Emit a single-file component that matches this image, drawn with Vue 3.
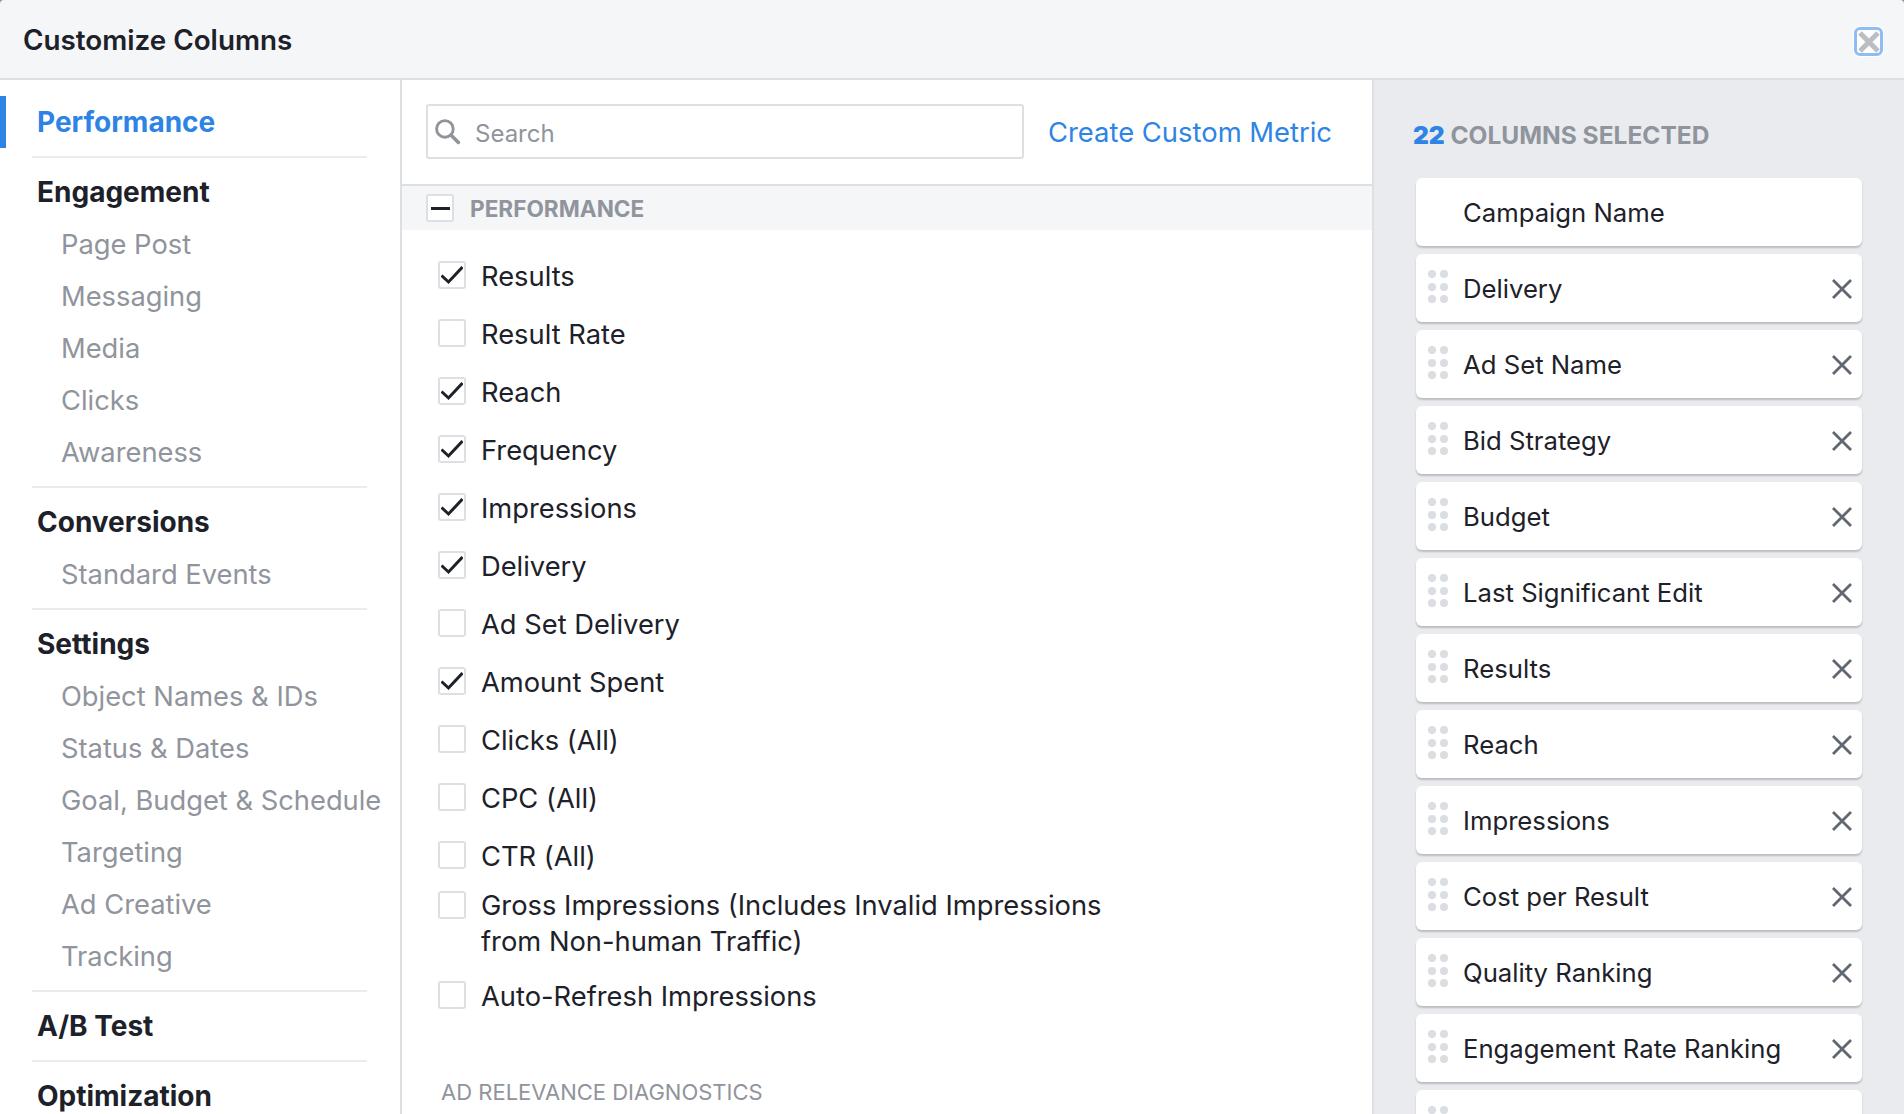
<template>
  <div class="modal">
    <header class="modal-head">
      <h1>Customize Columns</h1>
      <button class="close-btn" aria-label="Close">
        <svg width="22" height="22" viewBox="0 0 22 22" fill="none" stroke="#bcbec2" stroke-width="5">
          <path d="M2 2L20 20M20 2L2 20"/>
        </svg>
      </button>
    </header>

    <div class="modal-body">
      <nav class="side">
        <div class="side-row active">Performance</div>
        <template v-for="group in navGroups" :key="group.title">
          <hr class="side-rule" />
          <div class="side-row">{{ group.title }}</div>
          <div v-for="sub in group.items" :key="sub" class="side-sub">{{ sub }}</div>
        </template>
      </nav>

      <main class="middle">
        <div class="search-bar">
          <div class="search-box">
            <svg width="27" height="27" viewBox="0 0 26 26" fill="none" stroke="#90949c" stroke-width="2.8">
              <circle cx="10.5" cy="10.5" r="8"/>
              <path d="M16.5 16.5L23.5 23.5" stroke-linecap="round" stroke-width="3.4"/>
            </svg>
            <span>Search</span>
          </div>
          <a class="metric-link">Create Custom Metric</a>
        </div>

        <div class="section-head">
          <span class="check-box minus"><i></i></span>
          <span>PERFORMANCE</span>
        </div>

        <ul class="metric-list">
          <li v-for="m in metrics" :key="m.name" :class="{ tall: m.tall }">
            <span class="check-box">
              <svg v-if="m.on" width="22" height="22" viewBox="0 0 22 22" fill="none" stroke="#1d2129" stroke-width="3">
                <path d="M0.5 11.5L7.5 18L21.5 3"/>
              </svg>
            </span>
            <span class="metric-name">{{ m.name }}</span>
          </li>
        </ul>

        <div class="next-section">AD RELEVANCE DIAGNOSTICS</div>
      </main>

      <aside class="picked">
        <div class="picked-count"><b>22</b> COLUMNS SELECTED</div>
        <div class="card fixed">Campaign Name</div>
        <div v-for="c in columns" :key="c" class="card">
          <span class="dots"><i v-for="n in 6" :key="n"></i></span>
          <span class="card-name">{{ c }}</span>
          <svg class="remove" width="22" height="22" viewBox="0 0 22 22" fill="none" stroke="#606770" stroke-width="2.8">
            <path d="M2 2L20 20M20 2L2 20"/>
          </svg>
        </div>
        <div class="card">
          <span class="dots"><i v-for="n in 6" :key="n"></i></span>
        </div>
      </aside>
    </div>
  </div>
</template>

<script setup>
const navGroups = [
  { title: 'Engagement', items: ['Page Post', 'Messaging', 'Media', 'Clicks', 'Awareness'] },
  { title: 'Conversions', items: ['Standard Events'] },
  {
    title: 'Settings',
    items: ['Object Names & IDs', 'Status & Dates', 'Goal, Budget & Schedule', 'Targeting', 'Ad Creative', 'Tracking']
  },
  { title: 'A/B Test', items: [] },
  { title: 'Optimization', items: [] }
]

const metrics = [
  { name: 'Results', on: true },
  { name: 'Result Rate', on: false },
  { name: 'Reach', on: true },
  { name: 'Frequency', on: true },
  { name: 'Impressions', on: true },
  { name: 'Delivery', on: true },
  { name: 'Ad Set Delivery', on: false },
  { name: 'Amount Spent', on: true },
  { name: 'Clicks (All)', on: false },
  { name: 'CPC (All)', on: false },
  { name: 'CTR (All)', on: false },
  { name: 'Gross Impressions (Includes Invalid Impressions from Non-human Traffic)', on: false, tall: true },
  { name: 'Auto-Refresh Impressions', on: false }
]

const columns = [
  'Delivery',
  'Ad Set Name',
  'Bid Strategy',
  'Budget',
  'Last Significant Edit',
  'Results',
  'Reach',
  'Impressions',
  'Cost per Result',
  'Quality Ranking',
  'Engagement Rate Ranking'
]
</script>

<style>
html, body {
  margin: 0;
  overflow: hidden;
  background: #8a8d91;
}
</style>

<style scoped>
.modal {
  height: 1114px;
  overflow: hidden;
  display: flex;
  flex-direction: column;
  font-family: Inter, "Liberation Sans", sans-serif;
  color: #1d2129;
  font-size: 27.3px;
}

.modal-head {
  height: 78px;
  flex: none;
  box-sizing: content-box;
  display: flex;
  align-items: center;
  justify-content: space-between;
  padding: 0 21px 0 23px;
  background: #f5f6f7;
  border-bottom: 2px solid #dddfe2;
  border-radius: 4px 4px 0 0;
}

.modal-head h1 {
  margin: 2px 0 0;
  font-size: 27.8px;
  font-weight: 600;
}

.close-btn {
  width: 29px;
  height: 29px;
  padding: 0;
  margin-top: 5px;
  display: flex;
  align-items: center;
  justify-content: center;
  background: #fff;
  border: 3px solid #8ebdf5;
  border-radius: 6px;
  box-shadow: 0 0 0 1px #fff;
}

.modal-body {
  flex: 1;
  min-height: 0;
  display: flex;
  background: #fff;
}

.side {
  width: 400px;
  flex: none;
  padding: 16px 0 0;
  border-right: 2px solid #dddfe2;
  box-sizing: content-box;
}

.side-row {
  height: 52px;
  line-height: 53px;
  padding-left: 37px;
  font-size: 28px;
  font-weight: 700;
}

.side-row.active {
  color: #2d84e4;
  border-left: 6px solid #2d84e4;
  padding-left: 31px;
}

.side-sub {
  height: 52px;
  line-height: 53px;
  padding-left: 61px;
  color: #90949c;
  white-space: nowrap;
}

.side-rule {
  margin: 8px 33px 8px 32px;
  height: 2px;
  border: 0;
  background: #e9ebee;
}

.middle {
  width: 970px;
  flex: none;
  border-right: 2px solid #dddfe2;
}

.search-bar {
  height: 104px;
  box-sizing: border-box;
  padding: 24px 0 0 24px;
  display: flex;
  align-items: flex-start;
  gap: 24px;
}

.search-box {
  width: 598px;
  height: 55px;
  box-sizing: border-box;
  display: flex;
  align-items: center;
  gap: 14px;
  padding-left: 6px;
  border: 2px solid #dddfe2;
  border-radius: 3px;
  color: #90949c;
  font-size: 24px;
}

.search-box span {
  margin-top: 3px;
}

.metric-link {
  line-height: 57px;
  color: #2d84e4;
  font-size: 27.4px;
  white-space: nowrap;
}

.section-head {
  height: 44px;
  display: flex;
  align-items: center;
  gap: 16px;
  padding-left: 24px;
  background: #f5f6f7;
  border-top: 2px solid #dddfe2;
  color: #90949c;
  font-size: 22.6px;
  font-weight: 700;
}

.check-box {
  width: 28px;
  height: 28px;
  flex: none;
  box-sizing: border-box;
  display: flex;
  align-items: center;
  justify-content: center;
  background: #fff;
  border: 2px solid #dddfe2;
  border-radius: 3px;
}

.minus i {
  width: 19px;
  height: 3px;
  background: #1d2129;
}

.metric-list {
  list-style: none;
  margin: 0;
  padding: 17px 0 0 36px;
}

.metric-list li {
  height: 58px;
  display: flex;
  align-items: center;
  gap: 15px;
}

.metric-list li .check-box {
  margin-top: -3px;
}

.metric-list li.tall {
  height: 82px;
  box-sizing: border-box;
  align-items: flex-start;
  padding-top: 3px;
}

.metric-list li.tall .check-box {
  margin-top: 3px;
}

.metric-list li.tall .metric-name {
  width: 660px;
  line-height: 36px;
}

.next-section {
  margin: 54px 0 0 39px;
  color: #90949c;
  font-size: 22px;
}

.picked {
  flex: 1;
  min-width: 0;
  background: #e9ebee;
  padding: 41px 42px 0 42px;
}

.picked-count {
  height: 29px;
  line-height: 29px;
  margin: 0 0 28px -3px;
  color: #90949c;
  font-size: 24.5px;
  font-weight: 700;
  white-space: nowrap;
}

.picked-count b {
  color: #2d84e4;
}

.card {
  height: 68px;
  margin-bottom: 8px;
  display: flex;
  align-items: center;
  padding: 0 9px 0 12px;
  background: #fff;
  border-radius: 6px;
  box-shadow: 0 2px 2px rgba(0, 0, 0, 0.2);
  font-size: 25.7px;
}

.card.fixed {
  padding-left: 47px;
}

.dots {
  width: 20px;
  height: 33px;
  flex: none;
  margin: -3px 15px 0 0;
  display: grid;
  grid-template-columns: 8px 8px;
  grid-auto-rows: 8px;
  justify-content: space-between;
  align-content: space-between;
}

.dots i {
  background: #dadde1;
  border-radius: 50%;
}

.card-name {
  flex: 1;
  white-space: nowrap;
}

.remove {
  flex: none;
  margin-top: 2px;
}
</style>
